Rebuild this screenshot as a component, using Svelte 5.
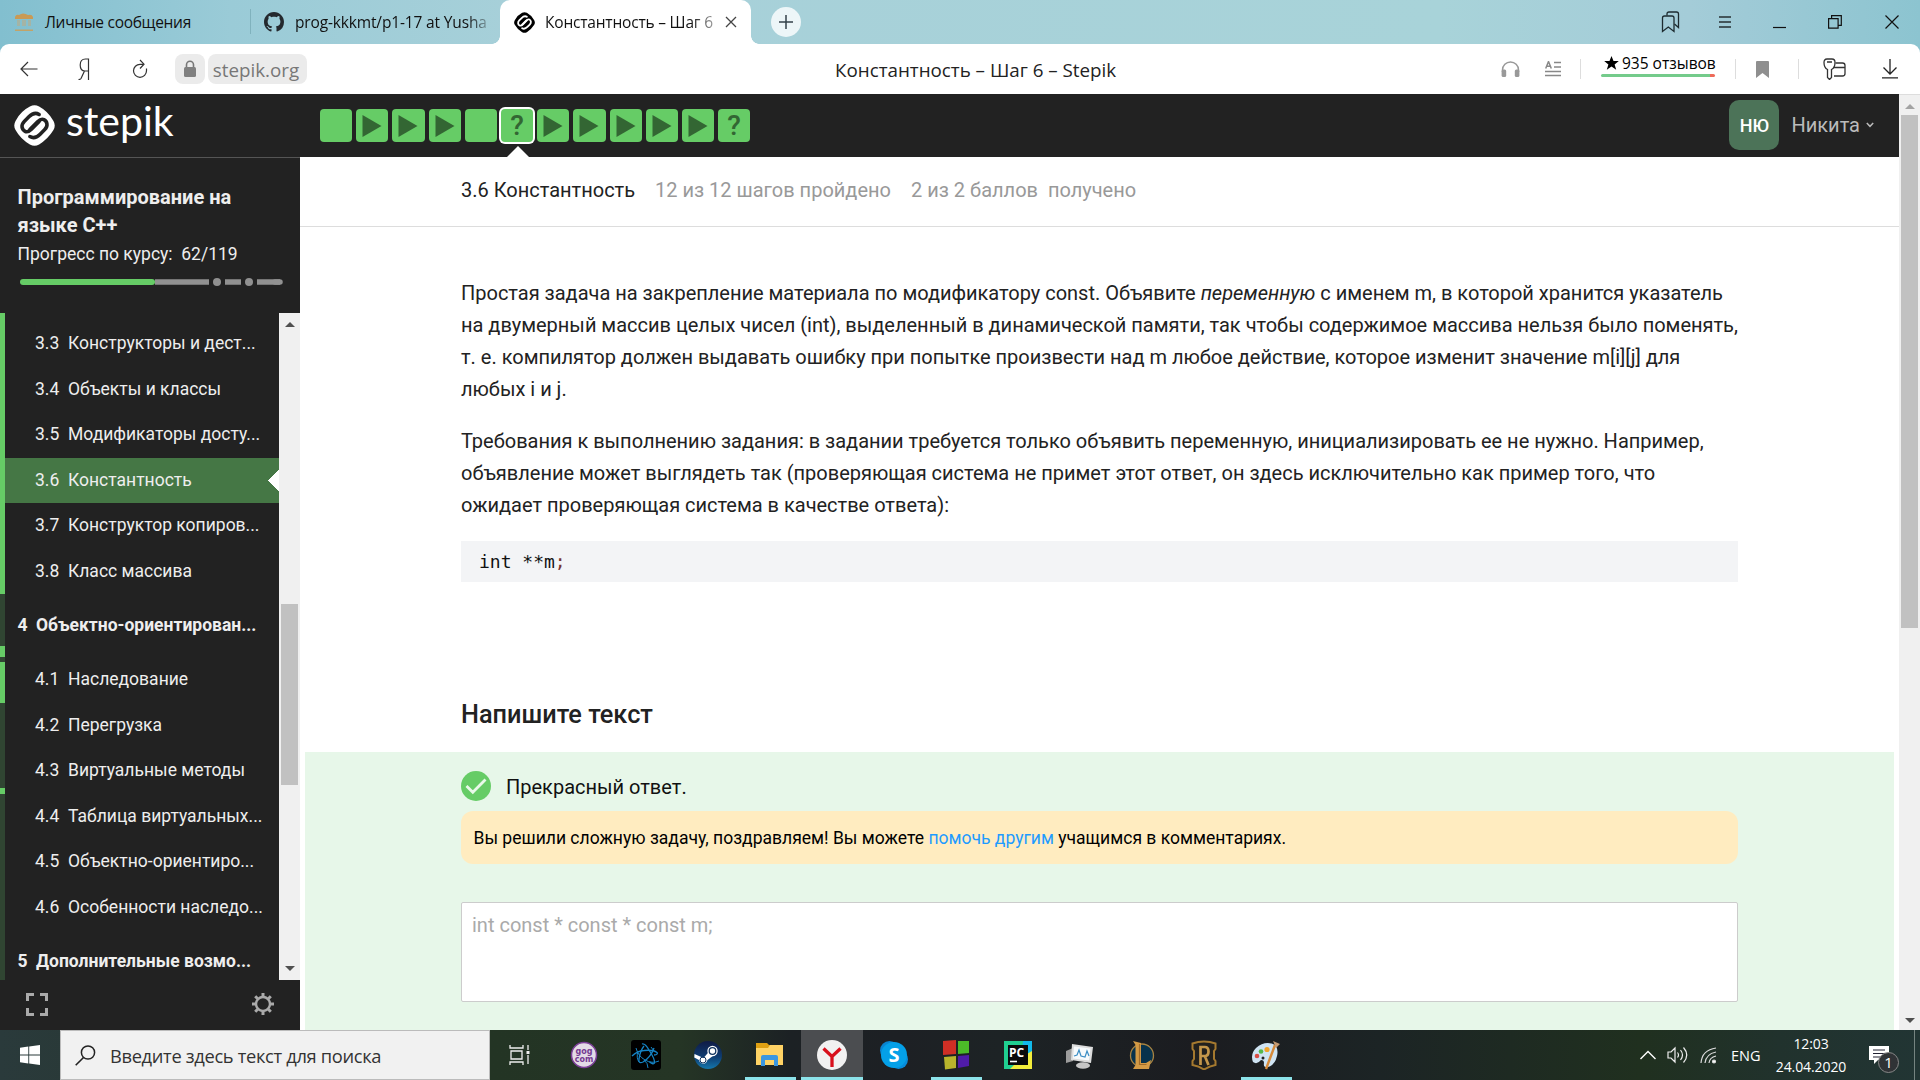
<script>
  const steps = ['text', 'video', 'video', 'video', 'text', 'quiz', 'video', 'video', 'video', 'video', 'video', 'quiz'];
  const current = 5;

  const menu = [
    { n: '3.3', t: 'Конструкторы и дест...' },
    { n: '3.4', t: 'Объекты и классы' },
    { n: '3.5', t: 'Модификаторы досту...' },
    { n: '3.6', t: 'Константность', active: true },
    { n: '3.7', t: 'Конструктор копиров...' },
    { n: '3.8', t: 'Класс массива' },
    { n: '4', t: 'Объектно-ориентирован...', head: true },
    { n: '4.1', t: 'Наследование' },
    { n: '4.2', t: 'Перегрузка' },
    { n: '4.3', t: 'Виртуальные методы' },
    { n: '4.4', t: 'Таблица виртуальных...' },
    { n: '4.5', t: 'Объектно-ориентиро...' },
    { n: '4.6', t: 'Особенности наследо...' },
    { n: '5', t: 'Дополнительные возмо...', head: true }
  ];

  // completion rail: heights in px, alternating done / remaining
  const rail = [
    { h: 281, done: true }, { h: 52 }, { h: 11, done: true }, { h: 5 },
    { h: 41, done: true }, { h: 85 }, { h: 6, done: true }, { h: 186 }
  ];

  const apps = ['gog', 'bnet', 'steam', 'files', 'yandex', 'skype', 'cubes', 'pycharm', 'monitor', 'lol', 'rune', 'paint'];
  const running = ['files', 'cubes', 'paint'];
</script>

{#snippet stepikMark(bg, fg)}
  <path d="M15.500 1.500Q20-1 24.500 1.500Q33 6 38.500 15.500Q41 20 38.500 24.500Q33 33.500 24.500 38.500Q20 41 15.500 38.500Q6.500 33.500 1.500 24.500Q-1 20 1.500 15.500Q6.500 6 15.500 1.500Z" fill={bg} />
  <g fill="none" stroke={fg} stroke-width="3.500" stroke-linecap="round" stroke-linejoin="round">
    <path d="M24.500 9.200C21 7 17.500 8.500 14.500 11.500L10 16C6.500 19.500 7.500 24 10.800 25.700C13 26.800 15 25.600 17 23.600L24.500 16" />
    <path d="M15.500 30.800C19 33 22.500 31.500 25.500 28.500L30 24C33.500 20.500 32.500 16 29.200 14.300C27 13.200 25 14.400 23 16.400L15.500 24" />
  </g>
{/snippet}

<div class="screen">
  <div class="chrome">
    <div class="tabs">
      <div class="tab first">
        <svg width="22" height="22" viewBox="0 0 22 22"><path d="M2 6q1-3 4-2 4-3 9 0 4-1 5 2v2H2z" fill="#c99a55" /><path d="M4 9h3v6H4zm5 0h4v6H9zm6 0h3v6h-3z" fill="#bfa982" opacity=".55" /><path d="M2 18.500h18v1.500H2z" fill="#c2a368" /></svg>
        <span class="t1">Личные сообщения</span>
      </div>
      <div class="tab second">
        <svg width="20" height="20" viewBox="0 0 16 16"><path fill="#24292e" d="M8 0C3.580 0 0 3.580 0 8c0 3.540 2.290 6.530 5.470 7.590.4.070.55-.17.55-.38 0-.19-.01-.82-.01-1.490-2.010.37-2.530-.49-2.690-.94-.09-.23-.48-.94-.82-1.130-.28-.15-.68-.52-.01-.53.63-.01 1.080.58 1.230.82.720 1.210 1.870.87 2.330.66.07-.52.28-.87.51-1.070-1.780-.2-3.640-.89-3.640-3.950 0-.87.31-1.590.82-2.150-.08-.2-.36-1.020.08-2.120 0 0 .67-.21 2.200.82.640-.18 1.320-.27 2-.27s1.360.09 2 .27c1.530-1.040 2.200-.82 2.200-.82.440 1.100.16 1.920.08 2.120.510.560.820 1.270.820 2.150 0 3.070-1.870 3.750-3.650 3.950.290.250.540.730.540 1.480 0 1.070-.01 1.930-.01 2.200 0 .21.150.46.550.38A8.010 8.010 0 0 0 16 8c0-4.420-3.580-8-8-8z" /></svg>
        <span class="t2">prog-kkkmt/p1-17 at Yusha</span>
      </div>
      <div class="tab active">
        <svg width="21" height="21" viewBox="0 0 40 40">{@render stepikMark('#000', '#fff')}</svg>
        <span class="t3">Константность – Шаг 6</span>
        <svg width="12" height="12" viewBox="0 0 12 12"><path d="M1 1l10 10M11 1L1 11" stroke="#444" stroke-width="1.300" /></svg>
      </div>
      <div class="plus"><svg width="14" height="14" viewBox="0 0 14 14"><path d="M7 0v14M0 7h14" stroke="#34424a" stroke-width="1.500" /></svg></div>
      <div class="controls">
        <div><svg width="20" height="22" viewBox="0 0 20 22" fill="none" stroke="#1d2b30" stroke-width="1.300"><path d="M1.500 20.500V7q0-2 2-2H11q2 0 2 2v13.500L7.300 16z" /><path d="M6 4.500V3q0-2 2-2h7.500q2 0 2 2v13.500L13.500 13" /></svg></div>
        <div><svg width="12" height="14" viewBox="0 0 12 14"><path d="M0 2h12M0 7h12M0 12h12" stroke="#44565b" stroke-width="2" /></svg></div>
        <div><svg width="14" height="14" viewBox="0 0 14 14"><path d="M0 12.500h13" stroke="#111" stroke-width="1.200" /></svg></div>
        <div><svg width="14" height="14" viewBox="0 0 14 14" fill="none" stroke="#111" stroke-width="1.200"><path d="M.6 3.600h9.500v9.500H.6zM3.600 3.500V.6h9.700v9.700h-3" /></svg></div>
        <div class="close"><svg width="14" height="14" viewBox="0 0 14 14"><path d="M.5.500l13 13M13.500.500l-13 13" stroke="#111" stroke-width="1.200" /></svg></div>
      </div>
    </div>

    <div class="toolbar">
      <div class="nav">
        <div><svg width="18" height="16" viewBox="0 0 18 16"><path d="M17.500 8H2M8 1L1 8l7 7" fill="none" stroke="#333" stroke-width="1.200" /></svg></div>
        <div><svg width="12" height="22" viewBox="0 0 12 22"><path d="M10.500 22V1H7.500C4 1 2.200 3.500 2.200 7s1.800 6 4.800 6h3.500M6.500 13L3 20.500q-.5 1-2.500 1" fill="none" stroke="#333" stroke-width="1.200" /></svg></div>
        <div><svg width="16" height="20" viewBox="0 0 16 20"><path d="M14.500 9.500v2.300a6.500 6.500 0 1 1-6.500-6.500h3M8 1l4 4.200L8 9.500" fill="none" stroke="#333" stroke-width="1.200" /></svg></div>
        <span class="lock"><svg width="14" height="18" viewBox="0 0 14 18"><path d="M3.500 8V4.800a3.500 3.500 0 0 1 7 0V8" fill="none" stroke="#777" stroke-width="1.600" /><rect x="1" y="7" width="12" height="10" rx="1.500" fill="#808080" /></svg></span>
        <span class="domain"><span>stepik.org</span></span>
      </div>
      <span class="ptitle">Константность – Шаг 6 – Stepik</span>
      <div class="tools">
        <div class="w44"><svg width="19" height="17" viewBox="0 0 19 17"><path d="M1.500 11V9a8 8 0 0 1 16 0v2" fill="none" stroke="#999" stroke-width="1.500" /><rect x=".6" y="8.500" width="4.600" height="7.500" rx="1.500" fill="#999" /><rect x="13.800" y="8.500" width="4.600" height="7.500" rx="1.500" fill="#999" /></svg></div>
        <div class="w42"><svg width="16" height="16" viewBox="0 0 16 16"><path d="M9 1.500h7M9 6h7M0 10.500h16M0 14.500h16" stroke="#888" stroke-width="1.700" /><path d="M.7 7.500L3.500.500 6.300 7.500M1.700 5.300h3.600" fill="none" stroke="#888" stroke-width="1.500" /></svg></div>
        <i class="s6"></i>
        <div class="reviews"><span><svg width="15" height="14" viewBox="0 0 15 14"><path d="M7.500 0l2 5h5.300l-4.200 3.400 1.600 5.400-4.700-3.200-4.700 3.200 1.600-5.400L.2 5h5.300z" /></svg>935 отзывов</span><b></b></div>
        <i class="s20"></i>
        <div class="w52"><svg width="13" height="17" viewBox="0 0 13 17"><path d="M0 1q0-1 1-1h11q1 0 1 1v16l-6.500-5L0 17z" fill="#8f8f8f" /></svg></div>
        <i class="s11"></i>
        <div class="w70"><svg width="23" height="22" viewBox="0 0 23 22" fill="none" stroke="#333" stroke-width="1.300"><path d="M4.500 19.500v-8C1.500 10 1 7.500 1 4.500Q1 1 4 1h5q3 0 3 3.500c0 3-.5 5.500-3.500 7v8l-2 2zM4 4h5" /><path d="M12.500 5h7q2.500 0 2.500 2.500v8q0 2.500-2.500 2.500H11M10.500 9.500H22" /></svg></div>
        <div class="w41"><svg width="16" height="20" viewBox="0 0 16 20"><path d="M8 0v15M1.500 8.500L8 15l6.500-6.500M0 18.800h16" fill="none" stroke="#222" stroke-width="1.300" /></svg></div>
      </div>
    </div>
  </div>

  <div class="page">
    <div class="site">
      <header>
        <div class="brand">
          <svg width="41" height="41" viewBox="0 0 40 40">{@render stepikMark('#fff', '#222')}</svg>
          <span>stepik</span>
        </div>
        <div class="steps">
          {#each steps as s, i}
            <div class="step" class:cur={i === current}>
              {#if s === 'video'}<svg width="20" height="22" viewBox="0 0 20 22"><path d="M.5 0L19.500 11 .5 22z" fill="#336633" /></svg>{/if}
              {#if s === 'quiz'}<span>?</span>{/if}
            </div>
          {/each}
        </div>
        <div class="user">
          <span class="avatar">НЮ</span><span class="name">Никита</span>
          <svg width="8" height="6" viewBox="0 0 8 6"><path d="M.8 1L4 4.300 7.200 1" fill="none" stroke="#bbb" stroke-width="1.500" /></svg>
        </div>
      </header>

      <div class="columns">
        <aside>
          <div class="course">
            <h2>Программирование на языке C++</h2>
            <p>Прогресс по курсу: &nbsp;62/119</p>
            <svg width="264" height="8" viewBox="0 0 264 8"><path d="M135 4h54M205 4h16M237 4h23" stroke="#919191" stroke-width="5.500" /><path d="M255 4h5" stroke="#919191" stroke-width="5.500" stroke-linecap="round" /><path d="M3 4h129" stroke="#6c6" stroke-width="6" stroke-linecap="round" /><circle cx="197" cy="4" r="4" fill="#919191" /><circle cx="229" cy="4" r="4" fill="#919191" /></svg>
          </div>
          <div class="toc">
            <div class="rail">{#each rail as r}<div class:done={r.done} style="height:{r.h}px"></div>{/each}</div>
            <nav>
              {#each menu as m}
                <div class="item" class:head={m.head} class:on={m.active}><span class="n">{m.n}</span><span>{m.t}</span></div>
              {/each}
            </nav>
            <div class="sbar side">
              <svg width="10" height="5" viewBox="0 0 10 5"><path d="M0 5L5 0l5 5z" fill="#505050" /></svg>
              <div class="thumb"></div>
              <svg width="10" height="5" viewBox="0 0 10 5"><path d="M0 0h10L5 5z" fill="#505050" /></svg>
            </div>
          </div>
          <div class="foot">
            <svg width="22" height="23" viewBox="0 0 22 23" fill="none" stroke="#aaa" stroke-width="3"><path d="M1.500 8V1.500H8M14 1.500h6.500V8M20.500 15v6.500H14M8 21.500H1.500V15" /></svg>
            <svg width="22" height="22" viewBox="0 0 22 22" fill="none" stroke="#aaa"><circle cx="11" cy="11" r="7" stroke-width="2.400" /><path d="M11 0v3.500M11 18.500V22M0 11h3.500M18.500 11H22M3.200 3.200l2.500 2.500M16.300 16.300l2.500 2.500M3.200 18.800l2.500-2.500M16.300 5.700l2.500-2.500" stroke-width="3" /></svg>
          </div>
        </aside>

        <main>
          <div class="crumbs"><span class="lesson">3.6 Константность</span><span class="c1">12 из 12 шагов пройдено</span><span>2 из 2 баллов &nbsp;получено</span></div>
          <article>
            <p>Простая задача на закрепление материала по модификатору const. Объявите <em>переменную</em> с именем m, в которой хранится указатель<br />на двумерный массив целых чисел (int), выделенный в динамической памяти, так чтобы содержимое массива нельзя было поменять,<br />т. е. компилятор должен выдавать ошибку при попытке произвести над m любое действие, которое изменит значение m[i][j] для<br />любых i и j.</p>
            <p>Требования к выполнению задания: в задании требуется только объявить переменную, инициализировать ее не нужно. Например,<br />объявление может выглядеть так (проверяющая система не примет этот ответ, он здесь исключительно как пример того, что<br />ожидает проверяющая система в качестве ответа):</p>
            <pre>int **m<span>;</span></pre>
            <h3>Напишите текст</h3>
          </article>
          <section>
            <div class="ok"><svg width="30" height="30" viewBox="0 0 30 30"><circle cx="15" cy="15" r="15" fill="#6c6" /><path d="M5.500 15l6.300 6.300L24.500 8.500" fill="none" stroke="#e9f9e9" stroke-width="2.800" /></svg><span>Прекрасный ответ.</span></div>
            <div class="hint">Вы решили сложную задачу, поздравляем! Вы можете <a href="#comments">помочь другим</a> учащимся в комментариях.</div>
            <div class="answer">int const * const * const m;</div>
          </section>
        </main>
      </div>
    </div>
    <div class="sbar win">
      <svg width="10" height="5" viewBox="0 0 10 5"><path d="M0 5L5 0l5 5z" fill="#a3a3a3" /></svg>
      <div class="thumb"></div>
      <svg width="10" height="5" viewBox="0 0 10 5"><path d="M0 0h10L5 5z" fill="#505050" /></svg>
    </div>
  </div>

  <div class="taskbar">
    <div class="start"><svg width="20" height="20" viewBox="0 0 20 20"><path d="M0 2.800L8.300 1.600V9.600H0zM9.200 1.500L20 0v9.600H9.200zM0 10.400h8.300v8L0 17.200zM9.200 10.400H20V20L9.200 18.500z" fill="#fff" /></svg></div>
    <div class="search"><svg width="21" height="21" viewBox="0 0 21 21"><circle cx="13" cy="7.500" r="6.600" fill="none" stroke="#222" stroke-width="1.500" /><path d="M8.500 12.500L.7 20.300" stroke="#222" stroke-width="1.600" /></svg><span>Введите здесь текст для поиска</span></div>
    <div class="view"><svg width="22" height="20" viewBox="0 0 22 20" fill="none" stroke="#eee" stroke-width="1.300"><path d="M1 0v3h13V0M2 6h11v8H2zM1 20v-3h13v3M19 0v5M19 10v9" /><path d="M17.500 7.500h3" stroke-width="3" /></svg></div>
    {#each apps as a}
      <div class="app" class:run={running.includes(a)} class:front={a === 'yandex'}>
        <svg width="30" height="30" viewBox="0 0 30 30">
          {#if a === 'gog'}
            <circle cx="15" cy="15" r="12.500" fill="#e3dce6" stroke="#7c3f98" stroke-width="1.500" />
            <text x="15" y="13.500" text-anchor="middle" class="gog">gog</text><text x="15" y="21.500" text-anchor="middle" class="gog">com</text>
          {:else if a === 'bnet'}
            <rect width="30" height="30" rx="3" fill="#000" />
            <g fill="none" stroke="#1583c4" stroke-width="1.300"><path d="M1 16q5-5 12-5.500 9-1 13 2 1.500 2-3 2.500" /><path d="M11 4q3-1 7 6 6 9 5.500 13-1 2-5-1" /><path d="M23 8q-3 9-11 14-5 2-4-3 1-8 5-13" /><path d="M5 8q2 8 9 12 7 4 14 1M7 11q-2 7 1 11M13 20q4 3 4 8M20 7l3 4" stroke-width="1" /></g>
          {:else if a === 'steam'}
            <defs><linearGradient id="st" x2="0" y2="1"><stop stop-color="#101b45" /><stop offset=".55" stop-color="#0e3b70" /><stop offset="1" stop-color="#1577ac" /></linearGradient></defs>
            <circle cx="15" cy="15" r="14" fill="url(#st)" /><path d="M1.500 14l9 4 7-8 5 4-8 6q-2 5-5.500 3.500Q6 22 6 20L1.300 17.500z" fill="#fff" /><circle cx="19.500" cy="11" r="5.200" fill="#fff" /><circle cx="19.500" cy="11" r="3.300" fill="none" stroke="#12345f" stroke-width="1.300" /><circle cx="10" cy="20" r="3" fill="none" stroke="#12345f" />
          {:else if a === 'files'}
            <path d="M1 3h11l2 2h13q1 0 1 1v5H1z" fill="#dfa012" /><path d="M1 8h12l2-3h13v20H1z" fill="#ffd365" /><path d="M6 26V17q0-2 2-2h13q2 0 2 2v9h-4v-6h-9v6z" fill="#3b97e0" />
          {:else if a === 'yandex'}
            <circle cx="15" cy="15" r="15" fill="#f1f1f1" /><path d="M6.500 8.500L15 16.500 23.500 8.500M15 16v11" fill="none" stroke="#d8101c" stroke-width="3.300" />
          {:else if a === 'skype'}
            <circle cx="10.500" cy="10.500" r="9.500" fill="#0a84d0" /><circle cx="19.500" cy="19.500" r="9.500" fill="#078cdb" /><circle cx="15" cy="15" r="13" fill="#04a0e8" /><text x="15" y="22" text-anchor="middle" class="sk">S</text>
          {:else if a === 'cubes'}
            <path d="M2 1l13-1v14L2 15z" fill="#cf2f25" /><path d="M17 1h11v12l-11 1z" fill="#4cbb28" /><path d="M3 17l12-1v12L4 29.500z" fill="#b9b52c" /><path d="M17 16l11-1v11L17 28z" fill="#4f1ca8" />
          {:else if a === 'pycharm'}
            <path d="M1 1h28v28H1z" fill="#20cf91" /><path d="M20 1h9v12L18 24z" fill="#12b9ea" /><path d="M29 11v18H7l12-12z" fill="#f3ed3b" /><path d="M5 5h20v20H5z" fill="#0a0a0a" /><text x="6" y="16.500" class="pc">PC</text><path d="M7 21.500h7" stroke="#fff" stroke-width="1.600" />
          {:else if a === 'monitor'}
            <path d="M1 11l7-3v13l-7 2z" fill="#9c9c9c" /><path d="M7 4l21 3-2 16-20-3z" fill="#dcdcdc" /><path d="M9 6.500l16.500 2-1.500 12-16-2z" fill="#f7fafc" /><path d="M9 16l3-1 2-5 2 6 4 1 2-6 2 5" fill="none" stroke="#3b8dc4" stroke-width="1.200" /><ellipse cx="18" cy="25.500" rx="7" ry="3.300" fill="#c6c6c6" />
          {:else if a === 'lol'}
            <circle cx="15" cy="15.500" r="11.500" fill="#07324c" stroke="#a98442" stroke-width="1.300" /><path d="M6 1l8 2v20h5l5-3-2 9H6l2.500-4V5z" fill="#d39a45" /><path d="M12.500 4v20.500h7" fill="none" stroke="#a26c2a" stroke-width="1.200" />
          {:else if a === 'rune'}
            <path d="M15 1.500q6 0 11.500 2V9l-1.500 2v8l1.500 2v4q-6 1-11.500 4.500Q10 26 3.500 25v-4L5 19v-8L3.500 9V3.500Q9 1.500 15 1.500z" fill="#22201d" stroke="#a5792f" stroke-width="2" /><path d="M11.500 25V7h4.300q3.700 0 3.700 4.500t-3.700 4.500h-3.500M15.800 16l3.700 9" fill="none" stroke="#c4964a" stroke-width="2.700" />
          {:else}
            <path d="M2 22Q-1 14 5 8q8-7 17-4 6 3 4 12-2 9-9 11-5 1-4-4 0-3-3-3-4 5-8 2z" fill="#cfe4f3" /><circle cx="6" cy="16" r="2.300" fill="#d94f45" /><circle cx="10" cy="11.500" r="2.300" fill="#54b94b" /><circle cx="16" cy="9.500" r="2.600" fill="#f2a52c" /><circle cx="12" cy="18" r="1.500" fill="#222" /><path d="M24 5L15 29" stroke="#d68a3a" stroke-width="2.400" /><path d="M22 1l7 3-4 4z" fill="#c49a72" />
          {/if}
        </svg>
      </div>
    {/each}
    <div class="tray">
      <svg width="16" height="10" viewBox="0 0 16 10"><path d="M.5 9L8 1.500 15.500 9" fill="none" stroke="#fff" stroke-width="1.400" /></svg>
      <svg class="snd" width="21" height="18" viewBox="0 0 21 18" fill="none" stroke="#eee" stroke-width="1.200"><path d="M1 6h3l4-4v14l-4-4H1zM10.500 6.500q2 2.500 0 5M13.500 4q4 5 0 10M16.500 1.500q6.500 7.500 0 15" /></svg>
      <svg class="wf" width="17" height="17" viewBox="0 0 17 17" fill="none" stroke="#ddd" stroke-width="1.200"><path d="M1 16Q2 3 16 1M5 16Q6 7 16 5M9 16q.5-5.500 7-7" /><circle cx="14" cy="14.500" r="1.500" fill="#fff" /></svg>
      <span class="lang">ENG</span>
      <div class="clock"><span>12:03</span><span>24.04.2020</span></div>
      <div class="note"><svg width="20" height="20" viewBox="0 0 20 20"><path d="M0 1h20v14H9l-4 4v-4H0z" fill="#fff" /><path d="M4 5h12M4 8.500h12M4 12h8" stroke="#223" stroke-width="1.200" /></svg><span>1</span></div>
      <i></i>
    </div>
  </div>
</div>

<style>
  :global(body) { margin: 0; overflow: hidden; }
  * { box-sizing: border-box; }
  svg { display: block; flex: none; }
  .screen { width: 1920px; height: 1080px; display: flex; flex-direction: column; font-family: Roboto, sans-serif; background: #fff; overflow: hidden; }

  .chrome, .taskbar { font-family: "Open Sans", "Noto Sans", sans-serif; }
  .chrome { height: 94px; flex: none; background: linear-gradient(90deg, #82bfcf, #9acbd7 12%, #a7d0d9 27%, #a8d3d9 75%, #a4ccd8 88%, #8cc4d0); }
  .tabs { height: 44px; display: flex; font-size: 15.500px; letter-spacing: -.15px; color: #111; white-space: nowrap; }
  .tab { display: flex; align-items: center; height: 44px; }
  .first { width: 251px; padding-left: 13px; gap: 10px; background: linear-gradient(#80b2bd, #80b2bd) right 9px / 1px 25px no-repeat; }
  .t1 { letter-spacing: -.3px; }
  .second { width: 249px; padding-left: 13px; gap: 11px; }
  .t2 { mask-image: linear-gradient(90deg, #000 172px, transparent 200px); }
  .active { position: relative; width: 251px; background: #fff; border-radius: 10px 10px 0 0; padding-left: 14px; gap: 10px; }
  .active::before, .active::after { content: ""; position: absolute; bottom: 0; width: 8px; height: 8px; }
  .active::before { left: -8px; background: radial-gradient(circle at 0 0, transparent 7.500px, #fff 8px); }
  .active::after { right: -8px; background: radial-gradient(circle at 100% 0, transparent 7.500px, #fff 8px); }
  .t3 { width: 169px; letter-spacing: -.2px; mask-image: linear-gradient(90deg, #000 145px, transparent 185px); }
  .active svg:last-child { margin-left: 1px; }
  .plus { width: 30px; height: 30px; margin: 7px 0 0 20px; border-radius: 50%; background: #edf6f8; display: grid; place-items: center; }
  .controls { margin-left: auto; margin-right: 2px; display: flex; }
  .controls div { width: 54.700px; display: grid; place-items: center; }
  .controls .close { width: 56px; padding-left: 3px; }

  .toolbar { height: 50px; background: #fff; border-radius: 9px 9px 0 0; display: flex; align-items: center; color: #222; }
  .nav { width: 835px; display: flex; align-items: center; padding-left: 1px; }
  .nav div { width: 55.500px; display: grid; place-items: center; }
  .lock { width: 30px; height: 30px; margin: 0 3px 0 7px; background: #ebebeb; border-radius: 8px; display: grid; place-items: center; }
  .domain { width: 99px; height: 30px; background: #ebebeb; border-radius: 8px; display: grid; place-items: center; font-size: 18.800px; color: #777; padding: 1px 2px 0 0; }
  .ptitle { font-size: 18.800px; white-space: nowrap; padding-top: 1px; }
  .tools { margin-left: auto; margin-right: 9px; display: flex; height: 50px; align-items: center; }
  .tools > div { display: grid; place-items: center; }
  .tools i { width: 1px; height: 20px; background: #ddd; }
  .w44 { width: 44px; } .w42 { width: 42px; } .w52 { width: 52px; } .w70 { width: 70px; } .w41 { width: 42px; }
  .s6 { margin-left: 6px; } .s20 { margin-left: 20px; } .s11 { margin-left: 10px; }
  .tools .reviews { width: 114px; margin: -9px 0 0 20px; display: flex; flex-direction: column; align-items: stretch; font-size: 15.500px; line-height: 22px; }
  .reviews span { display: flex; align-items: center; padding-left: 3px; white-space: nowrap; gap: 3px; color: #000; }
  .reviews b { height: 3px; border-radius: 2px; background: linear-gradient(90deg, #74cb8b 109px, #ee6a59 109px); }

  .page { height: 936px; flex: none; display: flex; }
  .site { width: 1899px; display: flex; flex-direction: column; }
  header { height: 63px; background: #222; display: flex; flex: none; }
  .brand { width: 320px; display: flex; align-items: center; padding-left: 14px; }
  .brand span { font: 400 41px/40px Lato, sans-serif; color: #fff; margin: -9px 0 0 11px; }
  .steps { display: flex; gap: 4px; padding-top: 15px; }
  .step { width: 32.200px; height: 33px; border-radius: 4px; background: #6c6; display: grid; place-items: center; color: #336633; font-size: 28px; line-height: 32px; font-weight: 500; }
  .cur { position: relative; box-shadow: 0 0 0 2px #fff; }
  .cur::after { content: ""; position: absolute; left: 5px; top: 37px; border: 12px solid transparent; border-top: 0; border-bottom-color: #fff; }
  .user { margin-left: auto; display: flex; align-items: center; padding-right: 25px; }
  .avatar { width: 50px; height: 50px; border-radius: 10px; background: #4c7358; color: #fff; font-size: 18px; font-weight: 500; display: grid; place-items: center; margin-right: 12px; }
  .user { padding-bottom: 1px; }
  .name { font-size: 20px; color: #bbb; margin-right: 6px; }

  .columns { display: flex; height: 873px; }
  aside { width: 300px; background: #222; border-top: 1px solid #555; flex: none; color: #eee; display: flex; flex-direction: column; }
  .course { height: 155px; padding: 25px 10px 0 17.500px; flex: none; }
  h2 { margin: 0; font-size: 20px; line-height: 28px; font-weight: 700; width: 240px; }
  .course p { margin: 1px 0 0; font-size: 17.500px; line-height: 28px; }
  .course svg { margin: 10px 0 0 2px; }
  .toc { height: 667px; flex: none; display: flex; overflow: hidden; }
  .rail { width: 5px; display: flex; flex-direction: column; }
  .rail div { background: #304532; flex: none; }
  .rail .done { background: #6c6; }
  nav { width: 274px; padding-top: 8px; }
  .item { height: 45.500px; display: flex; align-items: center; padding: 0 0 1px 30px; font-size: 17.500px; white-space: nowrap; }
  .n { width: 33px; }
  .head { height: 63px; padding-left: 12.500px; font-weight: 700; }
  .head .n { width: 18.500px; }
  .on { background: conic-gradient(from 45deg at 263px 50%, #fff 90deg, #457745 90deg); }
  .sbar { background: #f0f0f0; display: flex; flex-direction: column; align-items: center; }
  .thumb { background: #c1c1c1; width: 17px; }
  .side { width: 21px; padding-top: 9px; }
  .side .thumb { margin-top: 277px; height: 181px; }
  .side svg:last-child { margin: auto 0 9px; }
  .win { width: 21px; padding-top: 9px; border-top: 1px solid #ddd; }
  .win .thumb { margin-top: 6px; height: 513px; }
  .win svg:last-child { margin: auto 0 7px; }
  .foot { height: 50px; display: flex; justify-content: space-between; align-items: center; padding: 0 26px 2px; }

  main { flex: 1; display: flex; flex-direction: column; color: #222; }
  .crumbs { height: 70px; border-bottom: 1px solid #ddd; padding: 0 0 4px 161px; font-size: 20px; display: flex; align-items: center; color: #999; white-space: nowrap; }
  .lesson { color: #222; width: 194px; }
  .c1 { width: 256px; }
  article { padding: 50px 0 0 161px; height: 525px; width: 1438px; flex: none; }
  article p { margin: 0 0 20px; font-size: 20px; line-height: 32px; letter-spacing: -.008px; white-space: nowrap; }
  pre { margin: 0; height: 41px; background: #f3f4f6; padding-left: 18px; font: 18px/42px "DejaVu Sans Mono", monospace; color: #111; }
  pre span { color: #733; }
  h3 { margin: 118px 0 0; font-size: 25.300px; line-height: 30px; font-weight: 500; }
  section { margin: 0 5px; flex: 1; background: #e7f7e9; padding: 19px 156px 0; color: #111; }
  .ok { display: flex; align-items: center; gap: 15px; height: 30px; font-size: 20px; }
  .ok span { padding-top: 2px; }
  .hint { margin-top: 10px; height: 53px; border-radius: 12px; background: #ffecc0; padding-left: 12.500px; font-size: 17.520px; line-height: 54px; color: #000; }
  .hint a { color: #1e9bff; text-decoration: none; }
  .answer { margin-top: 38px; height: 100px; background: #fff; border: 1px solid #ccc; border-radius: 2px; padding: 7px 10px; font-size: 20px; line-height: 30px; color: #aaa; }

  .taskbar { height: 50px; flex: none; display: flex; background: linear-gradient(90deg, #2a3a3b 0, #233424 490px, #253525 680px, #1c2124 790px, #1d2024 900px, #1d2325 1000px, #1b1c20 1200px, #1c2425 1380px, #20301f 1640px, #21322d 1780px, #223534); }
  .start { width: 60px; display: grid; place-items: center; }
  .search { width: 430px; background: #f1f1f1; border: 1px solid #bbb; display: flex; align-items: center; padding-left: 14px; gap: 14px; color: #333; font-size: 18.300px; letter-spacing: -.32px; white-space: nowrap; }
  .view { width: 63px; padding-left: 19px; display: flex; align-items: center; }
  .app { width: 62px; display: grid; place-items: center; }
  .run { background: linear-gradient(#8ce3ea, #8ce3ea) center bottom / 51px 3px no-repeat; }
  .front { background: linear-gradient(#8ce3ea, #8ce3ea) bottom / 100% 3px no-repeat #4b4d50; }
  .gog { font: 700 8px "DejaVu Sans", sans-serif; fill: #753a92; }
  .sk { font: 700 20px "Open Sans", sans-serif; fill: #fff; }
  .pc { font: 700 12px "Open Sans", sans-serif; fill: #fff; }
  .tray { margin-left: auto; display: flex; align-items: center; color: #fff; font-size: 14.500px; }
  .snd { margin-left: 11px; } .wf { margin-left: 12px; }
  .lang { margin-left: 14px; width: 30px; }
  .clock { width: 70px; margin-left: 15px; display: flex; flex-direction: column; align-items: center; line-height: 23px; font-size: 14px; letter-spacing: -.1px; white-space: nowrap; }
  .note { position: relative; margin-left: 23px; width: 31px; }
  .note span { position: absolute; left: 9px; top: 7px; width: 21px; height: 21px; border-radius: 50%; background: #303336; border: 1px solid #888; text-align: center; line-height: 19px; font-size: 15px; }
  .tray i { width: 1px; height: 50px; background: #758380; margin: 0 5px 0 14px; }
</style>
